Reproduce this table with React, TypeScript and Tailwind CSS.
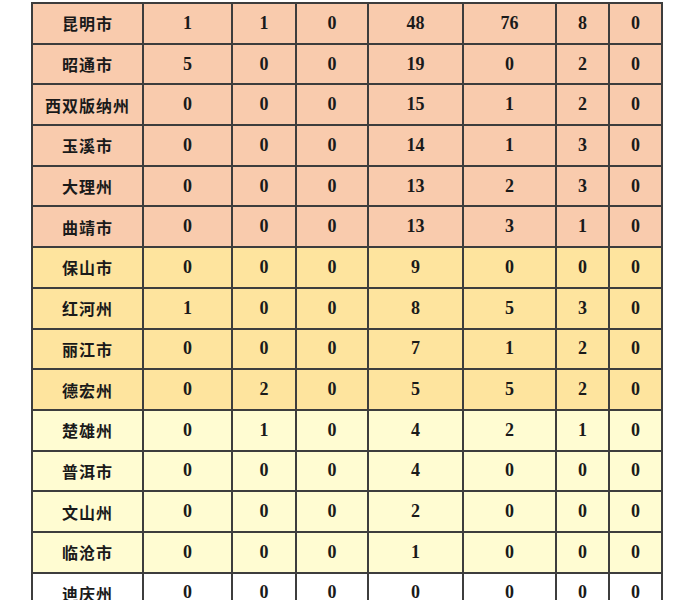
import React from "react";

type Row = { name: string; values: number[]; tone: "salmon" | "amber" | "pale" | "white" };

const rows: Row[] = [
    {name: "昆明市", values: [1, 1, 0, 48, 76, 8, 0], tone: "salmon"},
    {name: "昭通市", values: [5, 0, 0, 19, 0, 2, 0], tone: "salmon"},
    {name: "西双版纳州", values: [0, 0, 0, 15, 1, 2, 0], tone: "salmon"},
    {name: "玉溪市", values: [0, 0, 0, 14, 1, 3, 0], tone: "salmon"},
    {name: "大理州", values: [0, 0, 0, 13, 2, 3, 0], tone: "salmon"},
    {name: "曲靖市", values: [0, 0, 0, 13, 3, 1, 0], tone: "salmon"},
    {name: "保山市", values: [0, 0, 0, 9, 0, 0, 0], tone: "amber"},
    {name: "红河州", values: [1, 0, 0, 8, 5, 3, 0], tone: "amber"},
    {name: "丽江市", values: [0, 0, 0, 7, 1, 2, 0], tone: "amber"},
    {name: "德宏州", values: [0, 2, 0, 5, 5, 2, 0], tone: "amber"},
    {name: "楚雄州", values: [0, 1, 0, 4, 2, 1, 0], tone: "pale"},
    {name: "普洱市", values: [0, 0, 0, 4, 0, 0, 0], tone: "pale"},
    {name: "文山州", values: [0, 0, 0, 2, 0, 0, 0], tone: "pale"},
    {name: "临沧市", values: [0, 0, 0, 1, 0, 0, 0], tone: "pale"},
    {name: "迪庆州", values: [0, 0, 0, 0, 0, 0, 0], tone: "white"},
];

const toneClass: Record<Row["tone"], string> = {
    salmon: "bg-[#f9cbad]",
    amber: "bg-[#fee49e]",
    pale: "bg-[#fffcd2]",
    white: "bg-white",
};

const widths = ["w-[111px]", "w-[89px]", "w-[64px]", "w-[72px]", "w-[95px]", "w-[93px]", "w-[53px]", "w-[53px]"];

export default function App() {
    return (
        <div className="w-[700px] h-[600px] overflow-hidden bg-white pt-[2px] pl-[31px]">
            <table className="border-collapse table-fixed w-[632px]">
                <colgroup>
                    {widths.map((w, i) => <col key={i} className={w}/>)}
                </colgroup>
                <tbody>
                {rows.map((row) => (
                    <tr key={row.name} className={`h-[40.7px] ${toneClass[row.tone]}`}>
                        <td className="border-2 border-[#3d3d3d] text-center text-[16px] font-bold tracking-[1px] text-[#1a1a1a] font-['Noto_Sans_CJK_SC',sans-serif] p-0">
                            {row.name}
                        </td>
                        {row.values.map((v, i) => (
                            <td key={i}
                                className="border-2 border-[#3d3d3d] text-center text-[18px] font-bold text-[#1a1a1a] font-['Liberation_Serif',serif] p-0">
                                {v}
                            </td>
                        ))}
                    </tr>
                ))}
                </tbody>
            </table>
        </div>
    );
}
